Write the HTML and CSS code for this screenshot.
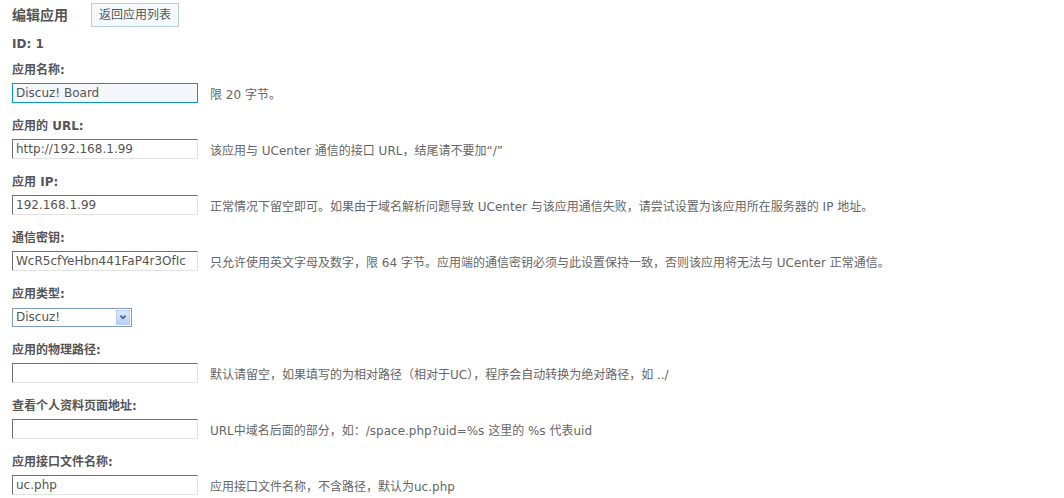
FILE: index.html
```html
<!DOCTYPE html>
<html lang="zh-CN">
<head>
<meta charset="utf-8">
<title>编辑应用</title>
<link rel="stylesheet" href="styles.css">
</head>
<body>
<div class="header">
  <h1 class="title">编辑应用</h1>
  <button class="back-btn" type="button">返回应用列表</button>
</div>
<div class="id-line">ID: 1</div>

<div class="field">
  <div class="label">应用名称:</div>
  <div class="row">
    <input class="txt focused" type="text" value="Discuz! Board">
    <span class="hint">限 20 字节。</span>
  </div>
</div>

<div class="field">
  <div class="label">应用的 URL:</div>
  <div class="row">
    <input class="txt" type="text" value="http://192.168.1.99">
    <span class="hint">该应用与 UCenter 通信的接口 URL，结尾请不要加“/”</span>
  </div>
</div>

<div class="field">
  <div class="label">应用 IP:</div>
  <div class="row">
    <input class="txt" type="text" value="192.168.1.99">
    <span class="hint">正常情况下留空即可。如果由于域名解析问题导致 UCenter 与该应用通信失败，请尝试设置为该应用所在服务器的 IP 地址。</span>
  </div>
</div>

<div class="field">
  <div class="label">通信密钥:</div>
  <div class="row">
    <input class="txt" type="text" value="WcR5cfYeHbn441FaP4r3OfIc">
    <span class="hint">只允许使用英文字母及数字，限 64 字节。应用端的通信密钥必须与此设置保持一致，否则该应用将无法与 UCenter 正常通信。</span>
  </div>
</div>

<div class="field">
  <div class="label">应用类型:</div>
  <div class="row">
    <div class="select-wrap">
      <select class="sel">
        <option>Discuz!</option>
      </select>
      <span class="sel-arrow"><svg width="14" height="14" viewBox="0 0 14 14"><path d="M4 5.5 L7 8.5 L10 5.5" fill="none" stroke="#4a5f87" stroke-width="2"/></svg></span>
    </div>
  </div>
</div>

<div class="field">
  <div class="label">应用的物理路径:</div>
  <div class="row">
    <input class="txt" type="text" value="">
    <span class="hint">默认请留空，如果填写的为相对路径（相对于UC），程序会自动转换为绝对路径，如 ../</span>
  </div>
</div>

<div class="field">
  <div class="label">查看个人资料页面地址:</div>
  <div class="row">
    <input class="txt" type="text" value="">
    <span class="hint">URL中域名后面的部分，如：/space.php?uid=%s 这里的 %s 代表uid</span>
  </div>
</div>

<div class="field">
  <div class="label">应用接口文件名称:</div>
  <div class="row">
    <input class="txt" type="text" value="uc.php">
    <span class="hint">应用接口文件名称，不含路径，默认为uc.php</span>
  </div>
</div>
</body>
</html>
```

FILE: styles.css
```css
html, body {
  margin: 0;
  background: #fff;
}
body {
  padding: 0 12px;
  font-family: "DejaVu Sans", "Noto Sans CJK SC", sans-serif;
  font-size: 12px;
  color: #666;
}
.header {
  display: flex;
  align-items: center;
  gap: 23px;
  padding-top: 3px;
  height: 24px;
}
.title {
  margin: 0;
  font-size: 14px;
  font-weight: bold;
  color: #555;
  line-height: 18px;
}
.back-btn {
  height: 24px;
  padding: 0 7px;
  border: 1px solid #b7d1db;
  background: #f3f9fc;
  font-family: "DejaVu Sans", "Noto Sans CJK SC", sans-serif;
  font-size: 12px;
  color: #555;
  line-height: 20px;
}
.id-line {
  margin: 8px 0;
  height: 18px;
  line-height: 18px;
  font-weight: bold;
  color: #555;
}
.field {
  display: flex;
  flex-direction: column;
  gap: 4px;
  margin: 0 0 14px;
}
.label {
  height: 18px;
  line-height: 18px;
  font-weight: bold;
  color: #555;
}
.row {
  display: flex;
  align-items: center;
  gap: 12px;
  height: 20px;
}
.txt {
  box-sizing: border-box;
  width: 186px;
  height: 20px;
  margin: 0;
  padding: 0 3px;
  border: 1px solid;
  border-color: #707070 #e2e2e2 #e2e2e2 #707070;
  background: #fff;
  font-family: "DejaVu Sans", "Noto Sans CJK SC", sans-serif;
  font-size: 12px;
  color: #555;
  outline: none;
}
.txt.focused {
  border-color: #0b98c9;
  background: #f4f8fc;
}
.hint {
  white-space: nowrap;
  color: #666;
}
.select-wrap {
  position: relative;
  width: 120px;
  height: 19px;
}
.sel {
  box-sizing: border-box;
  width: 120px;
  height: 19px;
  margin: 0;
  padding: 0 3px;
  border: 1px solid #7f9db9;
  border-radius: 0;
  background: #fff;
  -webkit-appearance: none;
  appearance: none;
  font-family: "DejaVu Sans", "Noto Sans CJK SC", sans-serif;
  font-size: 12px;
  color: #555;
  outline: none;
}
.sel-arrow {
  position: absolute;
  top: 2px;
  right: 2px;
  box-sizing: border-box;
  width: 14px;
  height: 15px;
  border: 1px solid #b9cdf3;
  background: linear-gradient(#dde8fb, #b9cff5);
  display: flex;
  align-items: center;
  justify-content: center;
}
.sel-arrow svg {
  display: block;
  width: 12px;
  height: 12px;
}
```
